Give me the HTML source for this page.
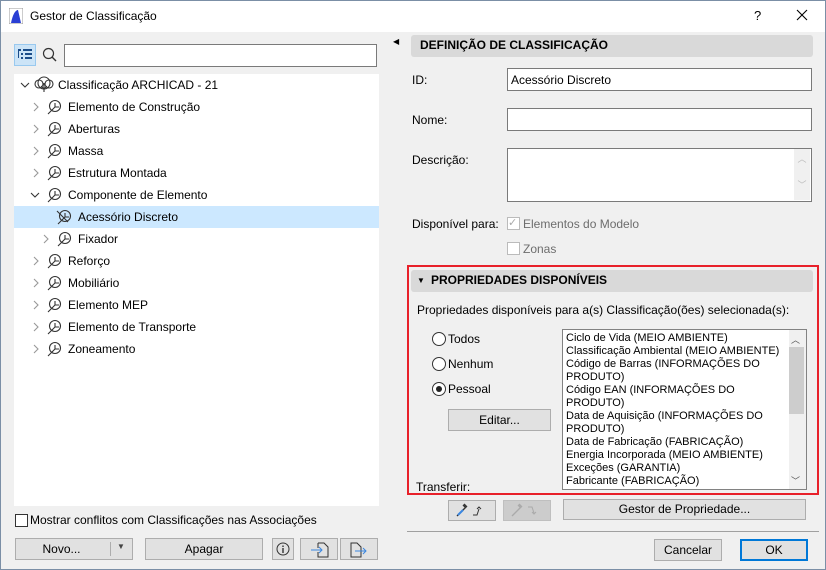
<!DOCTYPE html>
<html><head><meta charset="utf-8"><style>
*{box-sizing:border-box;margin:0;padding:0}
body{width:826px;height:570px;overflow:hidden;font:12px "Liberation Sans",sans-serif;color:#000;background:#f0f0f0;position:relative}
.a{position:absolute;white-space:nowrap}
.win{position:absolute;left:0;top:0;width:826px;height:570px;border:1px solid #7b8fa6}
.inp{position:absolute;background:#fff;border:1px solid #7a7a7a}
.btn{position:absolute;background:#e1e1e1;border:1px solid #adadad;text-align:center;line-height:20px}
.hdr{position:absolute;background:#d9d9d9;border-radius:3px;font-weight:bold;line-height:21px;padding-left:9px}
.cb{position:absolute;width:13px;height:13px;border:1px solid #333;background:#fff}
.rd{position:absolute;width:14px;height:14px;border:1px solid #333;border-radius:50%;background:#fff}
</style></head><body>
<div class="win"></div>
<div class="a" style="left:1px;top:1px;width:824px;height:31px;background:#fff"></div>
<svg class="a" style="left:9px;top:8px" width="14" height="16"><rect width="14" height="16" fill="#fff" stroke="#999"/><path d="M2 15 C4 5 7 2 9 2 L12 15Z" fill="#2a3fd4"/></svg>
<div class="a" style="left:30px;top:9px;font-size:12px">Gestor de Classificação</div>
<div class="a" style="left:754px;top:8px;font-size:13px">?</div>
<svg class="a" style="left:796px;top:9px" width="12" height="12"><path d="M1 1l10 10M11 1L1 11" stroke="#000" stroke-width="1.1"/></svg>

<!-- left -->
<div class="a" style="left:14px;top:44px;width:22px;height:22px;background:#cce4f7;border:1px solid #99c9ef"></div>
<svg class="a" style="left:17px;top:48px" width="16" height="14"><g fill="#1b4d8a"><rect x="1" y="1" width="3" height="2"/><rect x="6" y="1" width="9" height="2"/><rect x="4" y="5" width="2" height="2"/><rect x="8" y="5" width="7" height="2"/><rect x="4" y="9" width="2" height="2"/><rect x="8" y="9" width="7" height="2"/><rect x="1" y="3" width="1" height="7"/></g></svg>
<svg class="a" style="left:42px;top:47px" width="16" height="16"><circle cx="6.5" cy="6.5" r="5" fill="none" stroke="#333" stroke-width="1.2"/><path d="M10 10L14 14" stroke="#333" stroke-width="1.4"/></svg>
<div class="inp" style="left:64px;top:44px;width:313px;height:23px"></div>
<div class="a" style="left:14px;top:74px;width:365px;height:432px;background:#fff"></div>
<div class="a" style="left:14px;top:206px;width:365px;height:22px;background:#cce8ff"></div>
<svg class="a" style="left:14px;top:74px" width="200" height="290" fill="none" stroke="#333" stroke-width="1.1">
<path d="M7 9l4 4 4-4"/>
<circle cx="30" cy="9" r="6"/><circle cx="25" cy="10" r="4"/><circle cx="35" cy="10" r="4"/><path d="M30 9v9M27 12l3 3 3-3"/>
<g stroke="#999"><path d="M20 29l4 4-4 4M20 51l4 4-4 4M20 73l4 4-4 4M20 95l4 4-4 4M30 161l4 4-4 4M20 183l4 4-4 4M20 205l4 4-4 4M20 227l4 4-4 4M20 249l4 4-4 4M20 271l4 4-4 4"/></g>
<path d="M17 119l4 4 4-4"/>
<g id="lf"><circle cx="41" cy="32" r="5.5"/><path d="M34 40l7-7M41 29v4h4"/></g>
<use href="#lf" y="22"/><use href="#lf" y="44"/><use href="#lf" y="66"/><use href="#lf" y="88"/>
<use href="#lf" x="10" y="132"/><use href="#lf" y="154"/><use href="#lf" y="176"/><use href="#lf" y="198"/><use href="#lf" y="220"/><use href="#lf" y="242"/>
<use href="#lf" x="10" y="110"/><path d="M43 137l11 11" />
</svg>
<div class="a" style="left:58px;top:78px">Classificação ARCHICAD - 21</div>
<div class="a" style="left:68px;top:100px">Elemento de Construção</div>
<div class="a" style="left:68px;top:122px">Aberturas</div>
<div class="a" style="left:68px;top:144px">Massa</div>
<div class="a" style="left:68px;top:166px">Estrutura Montada</div>
<div class="a" style="left:68px;top:188px">Componente de Elemento</div>
<div class="a" style="left:78px;top:210px">Acessório Discreto</div>
<div class="a" style="left:78px;top:232px">Fixador</div>
<div class="a" style="left:68px;top:254px">Reforço</div>
<div class="a" style="left:68px;top:276px">Mobiliário</div>
<div class="a" style="left:68px;top:298px">Elemento MEP</div>
<div class="a" style="left:68px;top:320px">Elemento de Transporte</div>
<div class="a" style="left:68px;top:342px">Zoneamento</div>

<div class="cb" style="left:15px;top:514px"></div>
<div class="a" style="left:30px;top:513px">Mostrar conflitos com Classificações nas Associações</div>
<div class="btn" style="left:15px;top:538px;width:118px;height:22px;padding-right:25px">Novo...</div>
<div class="a" style="left:110px;top:542px;width:1px;height:14px;background:#adadad"></div>
<div class="a" style="left:117px;top:542px;font-size:8px;color:#444">▼</div>
<div class="btn" style="left:145px;top:538px;width:118px;height:22px">Apagar</div>
<div class="btn" style="left:272px;top:538px;width:22px;height:22px"></div>
<svg class="a" style="left:276px;top:542px" width="14" height="14"><circle cx="7" cy="7" r="6" fill="none" stroke="#333"/><path d="M7 6v5M7 3.5v1.5" stroke="#333" stroke-width="1.4"/></svg>
<div class="btn" style="left:300px;top:538px;width:38px;height:22px"></div>
<div class="btn" style="left:340px;top:538px;width:38px;height:22px"></div>
<svg class="a" style="left:300px;top:538px" width="80" height="22" fill="none"><path d="M18 5h6l4 4v10h-10v-5M18 10V5" stroke="#333"/><path d="M11 12h11M19 9l3 3-3 3" stroke="#3a86e0"/><path d="M51 5h6l4 4v10h-10z" stroke="#333"/><path d="M55 13h11M63 10l3 3-3 3" stroke="#3a86e0"/></svg>

<!-- right -->
<div class="a" style="left:393px;top:37px;font-size:8px">◀</div>
<div class="hdr" style="left:411px;top:35px;width:402px;height:22px">DEFINIÇÃO DE CLASSIFICAÇÃO</div>
<div class="a" style="left:412px;top:73px">ID:</div>
<div class="inp" style="left:507px;top:68px;width:305px;height:23px;padding:4px 3px">Acessório Discreto</div>
<div class="a" style="left:412px;top:113px">Nome:</div>
<div class="inp" style="left:507px;top:108px;width:305px;height:23px"></div>
<div class="a" style="left:412px;top:153px">Descrição:</div>
<div class="inp" style="left:507px;top:148px;width:305px;height:54px"></div>
<div class="a" style="left:794px;top:149px;width:16px;height:51px;background:#f0f0f0;color:#bbb;font-size:9px;text-align:center;line-height:13px;padding-top:4px">︿<br><br>﹀</div>
<div class="a" style="left:412px;top:217px">Disponível para:</div>
<div class="cb" style="left:507px;top:217px;border-color:#bbb"></div>
<div class="a" style="left:508px;top:216px;color:#aaa;font-size:11px">✓</div>
<div class="a" style="left:523px;top:217px;color:#6d6d6d">Elementos do Modelo</div>
<div class="cb" style="left:507px;top:242px;border-color:#bbb"></div>
<div class="a" style="left:523px;top:242px;color:#6d6d6d">Zonas</div>

<div class="a" style="left:407px;top:265px;width:412px;height:230px;border:2px solid #e8202a"></div>
<div class="hdr" style="left:411px;top:270px;width:402px;height:22px;padding-left:20px">PROPRIEDADES DISPONÍVEIS</div>
<div class="a" style="left:417px;top:276px;font-size:8px">▼</div>
<div class="a" style="left:417px;top:303px">Propriedades disponíveis para a(s) Classificação(ões) selecionada(s):</div>
<div class="rd" style="left:432px;top:332px"></div><div class="a" style="left:448px;top:332px">Todos</div>
<div class="rd" style="left:432px;top:357px"></div><div class="a" style="left:448px;top:357px">Nenhum</div>
<div class="rd" style="left:432px;top:382px"></div><div class="a" style="left:436px;top:386px;width:6px;height:6px;border-radius:50%;background:#222"></div><div class="a" style="left:448px;top:382px">Pessoal</div>
<div class="btn" style="left:448px;top:409px;width:103px;height:22px">Editar...</div>
<div class="a" style="left:416px;top:480px">Transferir:</div>
<div class="inp" style="left:562px;top:329px;width:245px;height:161px;border-color:#828282"></div>
<div class="a" style="left:789px;top:330px;width:17px;height:159px;background:#f0f0f0"></div>
<div class="a" style="left:789px;top:347px;width:15px;height:67px;background:#cdcdcd"></div>
<div class="a" style="left:791px;top:333px;font-size:9px;color:#555">︿</div>
<div class="a" style="left:791px;top:474px;font-size:9px;color:#555">﹀</div>
<div class="a" style="left:566px;top:332px;line-height:13px;font-size:11px">Ciclo de Vida (MEIO AMBIENTE)<br>Classificação Ambiental (MEIO AMBIENTE)<br>Código de Barras (INFORMAÇÕES DO<br>PRODUTO)<br>Código EAN (INFORMAÇÕES DO<br>PRODUTO)<br>Data de Aquisição (INFORMAÇÕES DO<br>PRODUTO)<br>Data de Fabricação (FABRICAÇÃO)<br>Energia Incorporada (MEIO AMBIENTE)<br>Exceções (GARANTIA)<br>Fabricante (FABRICAÇÃO)</div>

<div class="btn" style="left:448px;top:500px;width:48px;height:21px"></div>
<div class="btn" style="left:503px;top:500px;width:48px;height:21px;background:#ccc;border-color:#bfbfbf"></div>
<svg class="a" style="left:448px;top:500px" width="104" height="21" fill="none"><path d="M9 16l8-8M15 5l3 3M16 4l3 3" stroke="#333" stroke-width="1.4"/><path d="M10 15l5-5" stroke="#3a86e0" stroke-width="2"/><path d="M25 15h4l2-6M29 9l2-2 2 2" stroke="#333"/><path d="M64 16l8-8M70 5l3 3M71 4l3 3" stroke="#aaa" stroke-width="1.4"/><path d="M80 7h4l2 6M84 12l2 2 2-2" stroke="#aaa"/></svg>
<div class="btn" style="left:563px;top:499px;width:243px;height:21px;line-height:19px">Gestor de Propriedade...</div>
<div class="a" style="left:407px;top:531px;width:412px;height:1px;background:#a0a0a0"></div>
<div class="btn" style="left:654px;top:539px;width:68px;height:22px">Cancelar</div>
<div class="btn" style="left:740px;top:539px;width:68px;height:22px;border:2px solid #0078d7;line-height:18px">OK</div>
</body></html>
